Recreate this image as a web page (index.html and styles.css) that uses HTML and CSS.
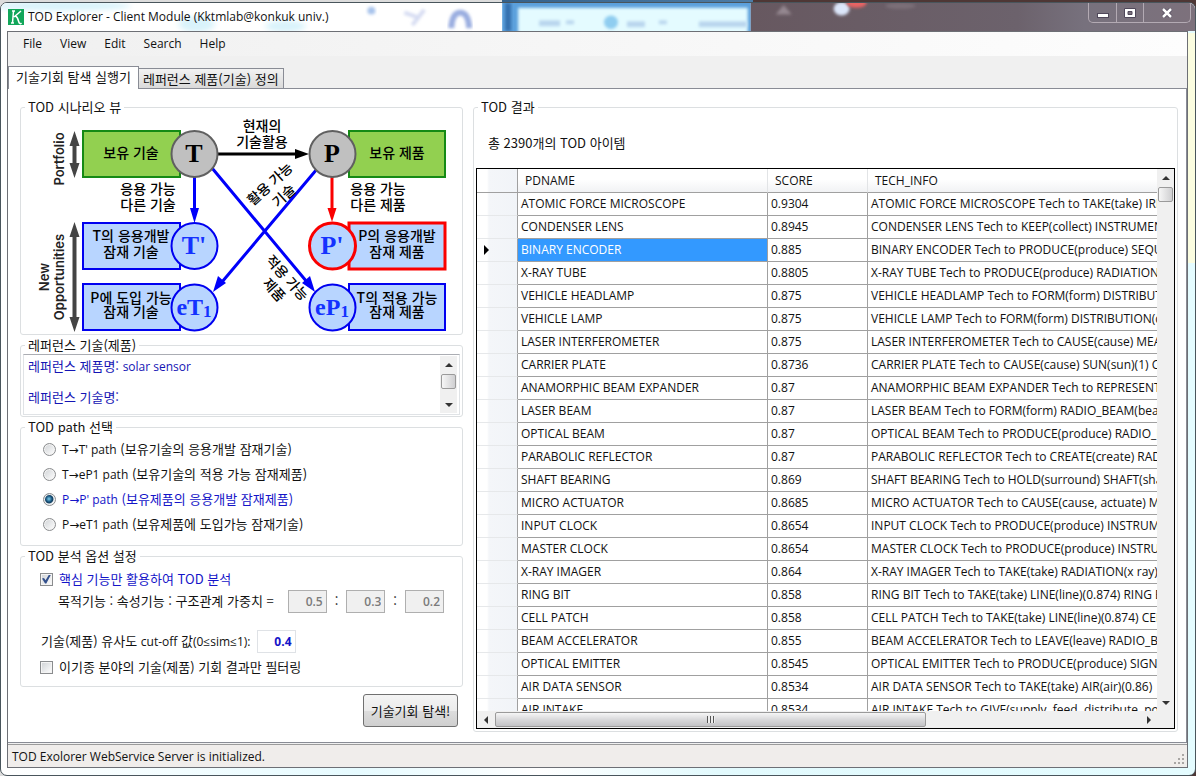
FILE: index.html
```html
<!DOCTYPE html>
<html lang="ko">
<head>
<meta charset="utf-8">
<title>TOD Explorer - Client Module</title>
<link rel="stylesheet" href="styles.css">
</head>
<body>
<div class="window">
  <header class="titlebar">
    <svg class="glass" viewBox="0 0 1196 29" preserveAspectRatio="none" aria-hidden="true">
      <defs>
        <filter id="soft" x="-20%" y="-50%" width="140%" height="200%"><feGaussianBlur stdDeviation="3"/></filter>
        <filter id="soft2" x="-20%" y="-50%" width="140%" height="200%"><feGaussianBlur stdDeviation="1.5"/></filter>
        <linearGradient id="plum" x1="0" x2="1" y1="0" y2="0"><stop offset="0" stop-color="#675860"/><stop offset=".6" stop-color="#6c626c"/><stop offset=".75" stop-color="#77717d"/><stop offset="1" stop-color="#7d717c"/></linearGradient>
      </defs>
      <rect width="1196" height="29" fill="#fff"/>
      <g filter="url(#soft)" fill="#d9f3fb"><ellipse cx="60" cy="3" rx="70" ry="5"/><ellipse cx="196" cy="22" rx="18" ry="8"/><ellipse cx="285" cy="24" rx="20" ry="6"/></g>
      <circle cx="371" cy="8" r="4" fill="#a9c4ec" filter="url(#soft2)"/>
      <path d="M404 10l14 5 6-8M418 15l-6 8" fill="none" stroke="#d6dcf2" stroke-width="4" filter="url(#soft2)"/>
      <path d="M451 26q1-16 9-16t9 16" fill="none" stroke="#9aade0" stroke-width="6" filter="url(#soft2)"/>
      <rect x="502" width="249" height="29" fill="#5ba0dc"/>
      <rect x="505" width="6" height="29" fill="#346fae" filter="url(#soft2)"/>
      <rect x="518" y="5" width="230" height="28" fill="#e4fbff" filter="url(#soft2)"/>
      <g filter="url(#soft2)" fill="#b9d6ee"><rect x="539" y="18" width="21" height="6"/><rect x="566" y="18" width="8" height="4"/><circle cx="611" cy="20" r="7" fill="#8fcdf0"/><rect x="627" y="19" width="18" height="6"/><rect x="659" y="18" width="8" height="4"/><rect x="699" y="19" width="48" height="6"/></g>
      <rect x="751" width="445" height="29" fill="url(#plum)"/>
      <path d="M776 12l8-10 8 10z" fill="#948790" filter="url(#soft2)"/>
      <ellipse cx="842" cy="6" rx="8" ry="7" fill="#dce6fa" filter="url(#soft2)"/>
      <ellipse cx="857" cy="0" rx="10" ry="5" fill="#e86364" filter="url(#soft2)"/>
      <ellipse cx="901" cy="3" rx="15" ry="3" fill="#7c6f78" filter="url(#soft2)"/>
    </svg>
    <svg class="logo" viewBox="0 0 16 16" aria-hidden="true"><rect width="16" height="16" fill="#12a65a"/><path d="M4 2h3M3 14h3M5.500 2l-1 12M13 2L6 8M7.500 7q2 1 3 5t3 2" fill="none" stroke="#fff" stroke-width="1.500"/></svg>
    <h1 class="title">TOD Explorer - Client Module (Kktmlab@konkuk univ.)</h1>
    <div class="caption">
      <button class="cap" aria-label="Minimize"><svg width="12" height="10" viewBox="0 0 12 10"><rect x=".5" y="5.500" width="11" height="4" fill="#fff" stroke="#50485a"/></svg></button>
      <button class="cap" aria-label="Maximize"><svg width="12" height="10" viewBox="0 0 12 10"><path fill-rule="evenodd" d="M.5.5h11v9H.5zM4 3.500v3h4v-3z" fill="#fff" stroke="#50485a"/></svg></button>
      <button class="cap close" aria-label="Close"><svg width="12" height="10" viewBox="0 0 12 10"><path d="M2 1l8 8M10 1L2 9" stroke="#50485a" stroke-width="4"/><path d="M2 1l8 8M10 1L2 9" stroke="#fff" stroke-width="2.500"/></svg></button>
    </div>
  </header>

  <div class="client">
    <nav class="menu">
      <button>File</button><button>View</button><button>Edit</button><button>Search</button><button>Help</button>
    </nav>
    <div class="tabs" role="tablist">
      <button class="tab active" role="tab" aria-selected="true">기술기회 탐색 실행기</button>
      <button class="tab" role="tab" aria-selected="false">레퍼런스 제품(기술) 정의</button>
    </div>

    <main class="page">
      <form class="side">
        <fieldset class="group scenario">
          <legend>TOD 시나리오 뷰</legend>
          <svg class="diagram" viewBox="21 115 441 219" role="img" aria-label="TOD 시나리오">
            <g stroke-width="2">
              <g fill="#92d050" stroke="#158a15"><rect x="83" y="131" width="97" height="46"/><rect x="349" y="131" width="96" height="46"/></g>
              <g fill="#b8d5ff" stroke="#0000f0"><rect x="83" y="223" width="97" height="46"/><rect x="83" y="284" width="97" height="46"/><rect x="349" y="284" width="96" height="46"/></g>
              <rect x="349" y="223" width="96" height="46" fill="#b8d5ff" stroke="#fa0000" stroke-width="3"/>
            </g>
            <path d="M217 154h80" stroke="#000" stroke-width="3"/><path d="M295 149l14 5-14 5z"/>
            <g stroke="#0000fa" stroke-width="3"><path d="M212 168L307 282M317 169L222 282M194.500 177v34"/></g>
            <g fill="#0000fa"><path d="M190 208h9l-4.500 15zM302 283l8-7 5 16zM226 283l-8-7-5 16z"/></g>
            <path d="M332 177v34" stroke="#fa0000" stroke-width="3"/><path d="M327.500 208h9L332 222z" fill="#fa0000"/>
            <g stroke-width="2">
              <g fill="#c0c0c0" stroke="#606060"><circle cx="194.500" cy="154" r="23"/><circle cx="332.500" cy="154" r="23"/></g>
              <g fill="#b8d5ff" stroke="#0000f0"><circle cx="194.500" cy="246" r="23"/><circle cx="194.500" cy="307.500" r="23"/><circle cx="332.500" cy="307.500" r="23"/></g>
              <circle cx="332.500" cy="246" r="23" fill="#b8d5ff" stroke="#fa0000" stroke-width="3"/>
            </g>
            <g stroke="#444" stroke-width="4"><path d="M74.500 142v24M74.500 235v84"/></g>
            <g fill="#444"><path d="M69.500 146h10l-5-15zM69.500 163h10l-5 15zM69.500 237h10l-5-15zM69.500 317h10l-5 15z"/></g>
            <g class="symbol"><text x="194" y="162">T</text><text x="332" y="162">P</text></g>
            <g class="symbol blue"><text x="194" y="254">T'</text><text x="332" y="254">P'</text></g>
            <g class="symbol blue small"><text x="194" y="315">eT<tspan class="sub" dy="2">1</tspan></text><text x="332" y="315">eP<tspan class="sub" dy="2">1</tspan></text></g>
            <g class="note">
              <text x="131" y="158">보유 기술</text><text x="397" y="158">보유 제품</text>
              <text x="262" y="131">현재의</text><text x="262" y="147">기술활용</text>
              <text x="148" y="194">응용 가능</text><text x="148" y="210">다른 기술</text>
              <text x="378" y="194">응용 가능</text><text x="378" y="210">다른 제품</text>
              <text x="131" y="241">T의 응용개발</text><text x="131" y="257">잠재 기술</text>
              <text x="397" y="241">P의 응용개발</text><text x="397" y="257">잠재 제품</text>
              <text x="131" y="303">P에 도입 가능</text><text x="131" y="317">잠재 기술</text>
              <text x="397" y="303">T의 적용 가능</text><text x="397" y="317">잠재 제품</text>
              <text transform="translate(270 184) rotate(-42)" y="5">활용 가능</text>
              <text transform="translate(284 196) rotate(-42)" y="5">기술</text>
              <text transform="translate(287 278) rotate(48)" y="5">적용 가능</text>
              <text transform="translate(274 290) rotate(48)" y="5">제품</text>
            </g>
            <g class="axis">
              <text transform="translate(64 159) rotate(-90)">Portfolio</text>
              <text transform="translate(49 277) rotate(-90)">New</text>
              <text transform="translate(64 277) rotate(-90)">Opportunities</text>
            </g>
          </svg>
        </fieldset>

        <fieldset class="group reference">
          <legend>레퍼런스 기술(제품)</legend>
          <div class="log">
            <div class="log-text"><p>레퍼런스 제품명: <span class="latin">solar sensor</span></p><p>레퍼런스 기술명:</p></div>
            <div class="vbar">
              <button type="button" class="arrow" aria-label="위로"><i class="up"></i></button>
              <div class="thumb"></div>
              <button type="button" class="arrow end" aria-label="아래로"><i class="down"></i></button>
            </div>
          </div>
        </fieldset>

        <fieldset class="group">
          <legend>TOD path 선택</legend>
          <div class="paths">
            <label><input type="radio" name="path"><span><span class="latin">T→T' path</span> (보유기술의 응용개발 잠재기술)</span></label>
            <label><input type="radio" name="path"><span><span class="latin">T→eP1 path</span> (보유기술의 적용 가능 잠재제품)</span></label>
            <label><input type="radio" name="path" checked><span class="chosen"><span class="latin">P→P' path</span> (보유제품의 응용개발 잠재제품)</span></label>
            <label><input type="radio" name="path"><span><span class="latin">P→eT1 path</span> (보유제품에 도입가능 잠재기술)</span></label>
          </div>
        </fieldset>

        <fieldset class="group">
          <legend>TOD 분석 옵션 설정</legend>
          <div class="options">
            <label class="check"><input type="checkbox" checked><span class="chosen">핵심 기능만 활용하여 TOD 분석</span></label>
            <div class="weights">
              <label for="w1">목적기능 : 속성기능 : 구조관계 가중치 =</label>
              <span class="ratio">
                <input class="num" id="w1" value="0.5" disabled><span>:</span>
                <input class="num" aria-label="속성기능" value="0.3" disabled><span>:</span>
                <input class="num" aria-label="구조관계" value="0.2" disabled>
              </span>
            </div>
            <div class="cutoff">
              <label for="cut">기술(제품) 유사도 <span class="latin">cut-off</span> 값<span class="latin">(0≤sim≤1):</span></label>
              <input class="num" id="cut" value="0.4">
            </div>
            <label class="check"><input type="checkbox">이기종 분야의 기술(제품) 기회 결과만 필터링</label>
          </div>
        </fieldset>
        <button type="button" class="run">기술기회 탐색!</button>
      </form>

      <fieldset class="group results">
        <legend>TOD 결과</legend>
        <p class="count">총 2390개의 TOD 아이템</p>
        <div class="datagrid">
          <div class="viewport">
            <table>
              <colgroup><col class="c-head"><col class="c-name"><col class="c-score"><col></colgroup>
              <thead><tr><th></th><th>PDNAME</th><th>SCORE</th><th>TECH_INFO</th></tr></thead>
              <tbody>
                <tr><th></th><td>ATOMIC FORCE MICROSCOPE</td><td>0.9304</td><td>ATOMIC FORCE MICROSCOPE Tech to TAKE(take) IRRADIATION</td></tr>
                <tr><th></th><td>CONDENSER LENS</td><td>0.8945</td><td>CONDENSER LENS Tech to KEEP(collect) INSTRUMENT</td></tr>
                <tr class="current"><th><i class="right"></i></th><td>BINARY ENCODER</td><td>0.885</td><td>BINARY ENCODER Tech to PRODUCE(produce) SEQUENCE</td></tr>
                <tr><th></th><td>X-RAY TUBE</td><td>0.8805</td><td>X-RAY TUBE Tech to PRODUCE(produce) RADIATION</td></tr>
                <tr><th></th><td>VEHICLE HEADLAMP</td><td>0.875</td><td>VEHICLE HEADLAMP Tech to FORM(form) DISTRIBUTION</td></tr>
                <tr><th></th><td>VEHICLE LAMP</td><td>0.875</td><td>VEHICLE LAMP Tech to FORM(form) DISTRIBUTION(distribution)</td></tr>
                <tr><th></th><td>LASER INTERFEROMETER</td><td>0.875</td><td>LASER INTERFEROMETER Tech to CAUSE(cause) MEASUREMENT</td></tr>
                <tr><th></th><td>CARRIER PLATE</td><td>0.8736</td><td>CARRIER PLATE Tech to CAUSE(cause) SUN(sun)(1) CARRIER</td></tr>
                <tr><th></th><td>ANAMORPHIC BEAM EXPANDER</td><td>0.87</td><td>ANAMORPHIC BEAM EXPANDER Tech to REPRESENT</td></tr>
                <tr><th></th><td>LASER BEAM</td><td>0.87</td><td>LASER BEAM Tech to FORM(form) RADIO_BEAM(beam)</td></tr>
                <tr><th></th><td>OPTICAL BEAM</td><td>0.87</td><td>OPTICAL BEAM Tech to PRODUCE(produce) RADIO_BEAM</td></tr>
                <tr><th></th><td>PARABOLIC REFLECTOR</td><td>0.87</td><td>PARABOLIC REFLECTOR Tech to CREATE(create) RADIATION</td></tr>
                <tr><th></th><td>SHAFT BEARING</td><td>0.869</td><td>SHAFT BEARING Tech to HOLD(surround) SHAFT(shaft)</td></tr>
                <tr><th></th><td>MICRO ACTUATOR</td><td>0.8685</td><td>MICRO ACTUATOR Tech to CAUSE(cause, actuate) MOTION</td></tr>
                <tr><th></th><td>INPUT CLOCK</td><td>0.8654</td><td>INPUT CLOCK Tech to PRODUCE(produce) INSTRUMENT</td></tr>
                <tr><th></th><td>MASTER CLOCK</td><td>0.8654</td><td>MASTER CLOCK Tech to PRODUCE(produce) INSTRUMENT</td></tr>
                <tr><th></th><td>X-RAY IMAGER</td><td>0.864</td><td>X-RAY IMAGER Tech to TAKE(take) RADIATION(x ray)</td></tr>
                <tr><th></th><td>RING BIT</td><td>0.858</td><td>RING BIT Tech to TAKE(take) LINE(line)(0.874) RING BIT</td></tr>
                <tr><th></th><td>CELL PATCH</td><td>0.858</td><td>CELL PATCH Tech to TAKE(take) LINE(line)(0.874) CELL</td></tr>
                <tr><th></th><td>BEAM ACCELERATOR</td><td>0.855</td><td>BEAM ACCELERATOR Tech to LEAVE(leave) RADIO_BEAM</td></tr>
                <tr><th></th><td>OPTICAL EMITTER</td><td>0.8545</td><td>OPTICAL EMITTER Tech to PRODUCE(produce) SIGNAL</td></tr>
                <tr><th></th><td>AIR DATA SENSOR</td><td>0.8534</td><td>AIR DATA SENSOR Tech to TAKE(take) AIR(air)(0.86)</td></tr>
                <tr><th></th><td>AIR INTAKE</td><td>0.8534</td><td>AIR INTAKE Tech to GIVE(supply, feed, distribute, pour)</td></tr>
              </tbody>
            </table>
          </div>
          <div class="vbar">
            <button type="button" class="arrow" aria-label="위로"><i class="up"></i></button>
            <div class="thumb"></div>
            <button type="button" class="arrow end" aria-label="아래로"><i class="down"></i></button>
          </div>
          <div class="hbar">
            <button type="button" class="arrow" aria-label="왼쪽으로"><i class="left"></i></button>
            <div class="track"><div class="hthumb"><i class="grip"></i></div></div>
            <button type="button" class="arrow" aria-label="오른쪽으로"><i class="right"></i></button>
          </div>
          <div class="corner"></div>
        </div>
      </fieldset>
    </main>

    <footer class="status">
      <span>TOD Exolorer WebService Server is initialized.</span>
      <svg class="sizer" width="11" height="11" viewBox="0 0 11 11" fill="#a9a6a4" aria-hidden="true"><path d="M8 0h2v2H8zM8 4h2v2H8zM4 4h2v2H4zM8 8h2v2H8zM4 8h2v2H4zM0 8h2v2H0z"/></svg>
    </footer>
  </div>
</div>
</body>
</html>
```
FILE: styles.css
```css
* { box-sizing: border-box; }

body {
  margin: 0;
  height: 100vh;
  padding-top: 2px;
  background: linear-gradient(90deg, #dcdcdc 42%, #35618a 42%, #4d7ca6 63%, #4e3735 63%);
  color: #111;
  font: 12px/16px "Open Sans", "Noto Sans CJK KR", sans-serif;
}

button, input { font: inherit; color: inherit; }
button { margin: 0; padding: 0; border: 0; background: none; }
p, h1 { margin: 0; }
i { display: inline-block; }

.window {
  height: 100%;
  display: flex;
  flex-direction: column;
  overflow: hidden;
  border: 1px solid #49555c;
  border-radius: 7px;
  padding: 0 7px 7px 6px;
  background: linear-gradient(90deg, transparent 50%, #fbfde0 50%) 0 30px / 100% 230px no-repeat,
    linear-gradient(90deg, #fff, #e6fbff 30%, #fff 45%, #e2fafd 60%, #e4fcff);
}

/* title bar */
.titlebar {
  position: relative;
  flex: none;
  height: 28px;
  margin: 0 -7px 0 -6px;
  display: flex;
  align-items: center;
  gap: 4px;
  padding-left: 7px;
}
.glass { position: absolute; inset: 0; width: 100%; height: 100%; }
.logo { position: relative; width: 16px; height: 16px; }
.title { position: relative; flex: 1; font-size: 12px; font-weight: 400; }
.caption {
  position: relative;
  align-self: flex-start;
  display: flex;
  margin-right: 4px;
  border: 1px solid #b3aab3;
  border-top: 0;
  border-radius: 0 0 5px 5px;
}
.cap { width: 27px; height: 19px; display: flex; align-items: center; justify-content: center; }
.cap + .cap { border-left: 1px solid #b3aab3; }
.cap.close { width: 47px; }

.client {
  flex: 1;
  min-height: 0;
  display: flex;
  flex-direction: column;
  border: 1px solid #6d6f75;
  background: #f0f0f0;
}
.menu {
  flex: none;
  height: 24px;
  display: flex;
  align-items: center;
  gap: 18px;
  padding-left: 15px;
  background: linear-gradient(90deg, #f0f0f0, #fdfdfd);
}

/* tabs */
.tabs { flex: none; display: flex; align-items: flex-end; height: 32px; }
.tab, .side, legend, .count { font-family: "Noto Sans CJK KR", sans-serif; font-size: 13px; }
.latin { font-family: "Open Sans", "DejaVu Sans", sans-serif; font-size: 12px; }
.tab {
  height: 20px;
  padding: 0 4px;
  border: 1px solid #898c95;
  border-left: 0;
  border-bottom: 0;
  background: linear-gradient(#f2f2f2, #dadada);
}
.tab.active {
  height: 23px;
  padding: 0 7px 2px 7px;
  margin-bottom: -1px;
  border-left: 1px solid #898c95;
  background: #fff;
  position: relative;
}

.page {
  flex: 1;
  min-height: 0;
  display: grid;
  grid-template-rows: minmax(0, 1fr);
  grid-template-columns: minmax(0, 443fr) minmax(0, 705fr);
  gap: 10px;
  padding: 10px 8px 10px 12px;
  border: 1px solid #898c95;
  border-left: 0;
  background: #fff;
}

.side { display: flex; flex-direction: column; gap: 2px; }
.group {
  min-width: 0;
  margin: 0;
  padding: 0;
  border: 1px solid #dcdfe1;
  border-radius: 3px;
}
legend { margin-left: 4px; padding: 0 3px; line-height: 16px; }
.chosen { color: #1414c8; }

.diagram { display: block; width: 100%; }
.symbol { font: bold 26px "Liberation Serif", serif; text-anchor: middle; }
.symbol.small { font-size: 24px; }
.symbol .sub { font-size: 17px; }
.blue { fill: #1432ff; }
.note { font: 500 14px "Noto Sans CJK KR", sans-serif; text-anchor: middle; }
.axis { font: 600 13px Inter, sans-serif; text-anchor: middle; fill: #222; }

/* reference log */
.log {
  display: flex;
  height: 61px;
  margin: 1px 2px;
  border: 1px solid #e0e3e6;
  border-top-color: #abadb3;
  padding: 1px 2px;
}
.log-text { flex: 1; padding: 2px 0 0 2px; color: #1414b4; }
.log-text p + p { margin-top: 14px; }

.vbar { display: flex; flex-direction: column; width: 17px; background: #f0f0f0; }
.arrow { width: 17px; height: 17px; flex: none; display: flex; align-items: center; justify-content: center; }
.arrow.end { margin-top: auto; }
.thumb {
  flex: none;
  height: 15px;
  margin: 1px;
  border: 1px solid #9a9a9a;
  border-radius: 2px;
  background: linear-gradient(90deg, #f6f6f6, #cfcfd1);
}
.up, .down { border: 4px solid transparent; border-top: 0; border-bottom: 4px solid #333; }
.down { transform: rotate(180deg); }
.left, .right { border: 4px solid transparent; border-left: 0; border-right: 4px solid #333; }
.right { transform: rotate(180deg); }

/* radio and check options */
.paths { padding: 2px 0 8px 22px; }
.paths label { display: flex; align-items: center; gap: 6px; height: 25px; }
input[type="radio"], input[type="checkbox"] {
  appearance: none;
  flex: none;
  width: 13px;
  height: 13px;
  margin: 0;
  border: 1px solid #8a8c8e;
  background: linear-gradient(135deg, #cfd2d5, #fff);
  box-shadow: inset 0 0 0 1px #f4f4f4;
}
input[type="radio"] { border-radius: 50%; }
input[type="radio"]:checked { background: radial-gradient(circle at 45% 45%, #7fd0ee 0, #16527c 3px, #16405f 4px, #e8eef2 5px); }
input[type="checkbox"] { display: grid; place-items: center; }
input[type="checkbox"]:checked::before {
  content: "";
  width: 9px;
  height: 9px;
  background: #33508c;
  clip-path: polygon(0 45%, 22% 40%, 40% 65%, 78% 0, 100% 0, 48% 100%, 34% 100%);
}

.options { padding: 5px 18px 9px 19px; }
.check { display: flex; align-items: center; gap: 6px; height: 20px; }
.weights { display: flex; align-items: center; justify-content: space-between; height: 24px; padding-left: 18px; white-space: nowrap; }
.ratio { display: flex; align-items: center; gap: 8px; }
.num {
  width: 39px;
  height: 23px;
  padding: 0 3px;
  border: 1px solid #dfe2e6;
  background: #fff;
  color: #1414c8;
  font: 700 12px "Open Sans", sans-serif;
  text-align: right;
}
.num:disabled { border-color: #afafaf; background: #f0f0f0; color: #7b7b7b; font-weight: 600; }
.cutoff { display: flex; align-items: center; gap: 6px; margin: 17px 0 4px 1px; }
.run {
  align-self: flex-end;
  width: 95px;
  height: 33px;
  margin: 5px 5px 0 0;
  border: 1px solid #707070;
  border-radius: 3px;
  background: linear-gradient(#f4f4f4, #ebebeb 50%, #dddddd 50%, #cfcfcf);
}

/* results */
.results { display: flex; flex-direction: column; padding: 0 2px 2px; }
.results legend { margin-left: 2px; }
.count { padding: 20px 12px 17px; }
.datagrid {
  flex: 1;
  min-height: 0;
  display: grid;
  grid-template: minmax(0, 1fr) 17px / minmax(0, 1fr) 17px;
  border: 1px solid #000;
}
.viewport { overflow: hidden; }
table { width: 100%; table-layout: fixed; border-collapse: separate; border-spacing: 0; }
.c-head { width: 41px; }
.c-name { width: 250px; }
.c-score { width: 100px; }
th, td {
  height: 23px;
  padding: 0 3px;
  border-right: 1px solid #a0a0a0;
  border-bottom: 1px solid #a0a0a0;
  font-weight: 400;
  text-align: left;
  white-space: nowrap;
  overflow: hidden;
}
th:last-child, td:last-child { border-right: 0; }
thead th { height: 24px; padding-left: 7px; border-right-color: #e2e4e6; background: linear-gradient(#fff 45%, #f1f2f4); }
thead th:first-child, tbody th { border-right-color: #a0a0a0; background: linear-gradient(90deg, #fff 25%, #f4f6f9 30%, #f1f4f8); }
tbody th { padding: 0 7px; border-bottom-color: #e6e8ea; }
.current .right { display: block; width: 0; border-width: 5px 5px 5px 0; border-right-color: #000; }
.current td:nth-child(2) { background: #3399ff; color: #fff; }
.hbar { display: flex; background: #f0f0f0; }
.track { flex: 1; padding: 1px; }
.hthumb {
  width: 67%;
  height: 15px;
  display: flex;
  align-items: center;
  justify-content: center;
  border: 1px solid #9a9a9a;
  border-radius: 2px;
  background: linear-gradient(#f6f6f6, #d9d9db 50%, #c3c3c6);
}
.grip { width: 8px; height: 7px; background: repeating-linear-gradient(90deg, #555 0 1px, #eee 1px 3px); }
.corner { background: #f0f0f0; }

.status {
  flex: none;
  height: 23px;
  margin-top: 1px;
  display: flex;
  align-items: center;
  justify-content: space-between;
  padding: 2px 2px 0 4px;
  border-top: 1px solid #9b9b9b;
  background: #f0edeb;
}
.sizer { align-self: flex-end; margin-bottom: 2px; }
```
